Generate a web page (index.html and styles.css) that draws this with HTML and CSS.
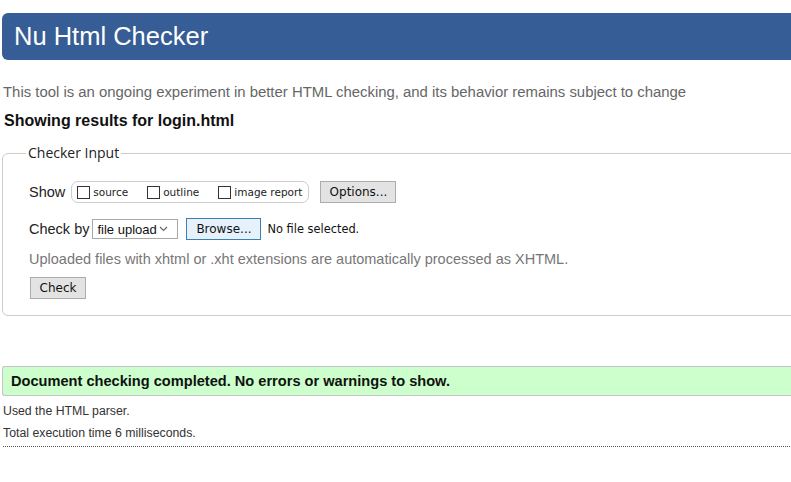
FILE: index.html
```html
<!DOCTYPE html>
<html>
<head>
<meta charset="utf-8">
<title>Nu Html Checker</title>
<link rel="stylesheet" href="styles.css">
</head>
<body>
<div class="page">
  <h1 class="banner">Nu Html Checker</h1>
  <p class="intro">This tool is an ongoing experiment in better HTML checking, and its behavior remains subject to change</p>
  <h2 class="showing">Showing results for login.html</h2>
  <fieldset class="input">
    <legend>Checker Input</legend>
    <div class="row show-row">
      <span class="lbl show">Show</span>
      <span class="group">
        <label class="opt"><span class="box"></span>source</label>
        <label class="opt"><span class="box"></span>outline</label>
        <label class="opt"><span class="box"></span>image report</label>
      </span>
      <span class="btn options">Options...</span>
    </div>
    <div class="row by-row">
      <span class="lbl">Check by</span>
      <span class="select">file upload<svg class="chev" width="9" height="6" viewBox="0 0 9 6"><path d="M1 1l3.5 3.5L8 1" fill="none" stroke="#666" stroke-width="1.2"/></svg></span>
      <span class="btn browse">Browse...</span>
      <span class="nofile">No file selected.</span>
    </div>
    <p class="note">Uploaded files with xhtml or .xht extensions are automatically processed as XHTML.</p>
    <span class="btn check">Check</span>
  </fieldset>
  <div class="success">Document checking completed. No errors or warnings to show.</div>
  <p class="meta first">Used the HTML parser.</p>
  <p class="meta">Total execution time 6 milliseconds.</p>
  <div class="rule"></div>
</div>
</body>
</html>
```
FILE: styles.css
```css
html { overflow: hidden; }
body {
  margin: 0;
  background: #fff;
  font-family: "Liberation Sans", Arial, sans-serif;
  color: #222;
}
.page {
  width: 830px;
  padding: 13px 0 0 2px;
}
.banner {
  margin: 0;
  height: 47px;
  box-sizing: border-box;
  background: #365d95;
  color: #fff;
  font-weight: normal;
  font-size: 25.5px;
  line-height: 47px;
  padding-left: 12px;
  border-radius: 6px;
}
.intro {
  margin: 22px 0 0 1px;
  font-size: 14.9px;
  line-height: 20px;
  color: #666;
}
.showing {
  margin: 9px 0 0 2px;
  font-size: 16px;
  line-height: 20px;
  font-weight: bold;
  color: #111;
}
.input {
  margin: 13px 0 0 0;
  border: 1px solid #ccc;
  border-radius: 6px;
  padding: 19px 0 16px 26px;
  min-width: 0;
}
.input legend {
  font-family: "Open Sans", "Liberation Sans", sans-serif;
  font-size: 14px;
  color: #222;
  padding: 0 2px;
  margin-left: -3px;
  line-height: 18px;
}
.row {
  display: flex;
  align-items: center;
}
.lbl {
  font-size: 14.5px;
  color: #222;
  margin-right: 3px;
}
.lbl.show { margin-right: 6px; }
.group {
  display: inline-flex;
  align-items: center;
  height: 20px;
  border: 1px solid #ccc;
  border-radius: 7px;
  padding: 0 6px 0 5px;
}
.opt {
  display: inline-flex;
  align-items: center;
  font-family: "DejaVu Sans", Verdana, sans-serif;
  font-size: 10.5px;
  color: #222;
  margin-right: 19px;
}
.opt:last-child { margin-right: 0; }
.box {
  width: 11px;
  height: 11px;
  border: 1px solid #333;
  margin-right: 3px;
  background: #fff;
}
.btn {
  display: inline-flex;
  align-items: center;
  justify-content: center;
  box-sizing: border-box;
  height: 22px;
  border: 1px solid #adadad;
  background: #e3e3e3;
  font-family: "DejaVu Sans", Verdana, sans-serif;
  font-size: 12px;
  color: #111;
}
.options { width: 76px; margin-left: 11px; }
.by-row { margin-top: 15px; }
.select {
  display: inline-flex;
  align-items: center;
  justify-content: space-between;
  box-sizing: border-box;
  width: 86px;
  height: 20px;
  border: 1px solid #a9a9a9;
  padding: 0 9px 0 4px;
  font-family: "Liberation Sans", Arial, sans-serif;
  font-size: 13px;
  color: #111;
}
.browse {
  width: 75px;
  margin-left: 8px;
  border-color: #3c7fb1;
  background: #e5f1fb;
}
.nofile {
  margin-left: 6px;
  font-family: "DejaVu Sans", Verdana, sans-serif;
  font-size: 11.4px;
  color: #111;
}
.note {
  margin: 10px 0 0 0;
  font-size: 14.5px;
  line-height: 18px;
  color: #777;
}
.check {
  width: 56px;
  margin: 9px 0 0 1px;
}
.success {
  margin-top: 50px;
  height: 30px;
  box-sizing: border-box;
  border: 1px solid #c4c4c4;
  border-right: 0;
  border-radius: 3px 0 0 3px;
  background: #ccffcc;
  padding-left: 8px;
  font-size: 14.6px;
  font-weight: bold;
  line-height: 28px;
  color: #111;
}
.meta {
  margin: 0 0 0 1px;
  font-size: 12.3px;
  line-height: 22px;
  color: #333;
}
.meta.first { margin-top: 4px; }
.rule {
  margin-top: 2px;
  margin-left: 1px;
  border-top: 1px dotted #555;
}
```
